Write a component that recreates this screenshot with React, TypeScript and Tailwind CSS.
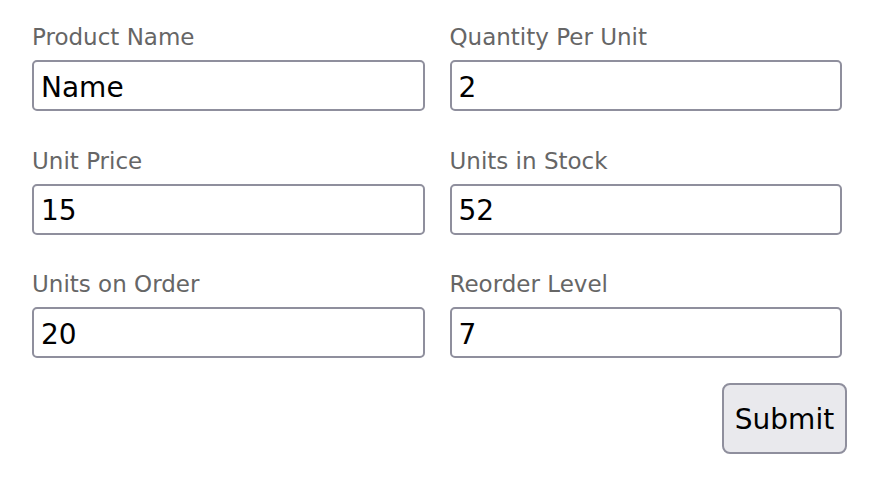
import React from "react";

const fields: [string, string][] = [
  ["Product Name", "Name"],
  ["Quantity Per Unit", "2"],
  ["Unit Price", "15"],
  ["Units in Stock", "52"],
  ["Units on Order", "20"],
  ["Reorder Level", "7"],
];

export default function App() {
  return (
    <div
      className="bg-white w-[883px] h-[492px] pl-[32px] pt-[23px]"
      style={{ fontFamily: '"DejaVu Sans", Verdana, sans-serif' }}
    >
      <form className="w-[810px]" onSubmit={(e) => e.preventDefault()}>
        <div className="grid grid-cols-2 gap-x-[25px] gap-y-[35.5px]">
          {fields.map(([label, value]) => (
            <div key={label} className="flex flex-col">
              <label className="text-[23px] leading-[28px] text-[#666666] mb-[9px]">
                {label}
              </label>
              <input
                defaultValue={value}
                className="h-[51px] w-full border-2 border-[#8f8f9d] rounded-[5px] px-[7px] pt-[3px] text-[28px] text-black outline-none"
                style={{ fontFamily: '"DejaVu Sans", Verdana, sans-serif' }}
              />
            </div>
          ))}
        </div>
        <div className="flex justify-end mt-[25px] mr-[-5px]">
          <button
            type="submit"
            className="w-[125px] h-[71px] bg-[#e9e9ed] border-2 border-[#8f8f9d] rounded-[8px] pt-[2px] text-[28px] text-black"
            style={{ fontFamily: '"DejaVu Sans", Verdana, sans-serif' }}
          >
            Submit
          </button>
        </div>
      </form>
    </div>
  );
}
